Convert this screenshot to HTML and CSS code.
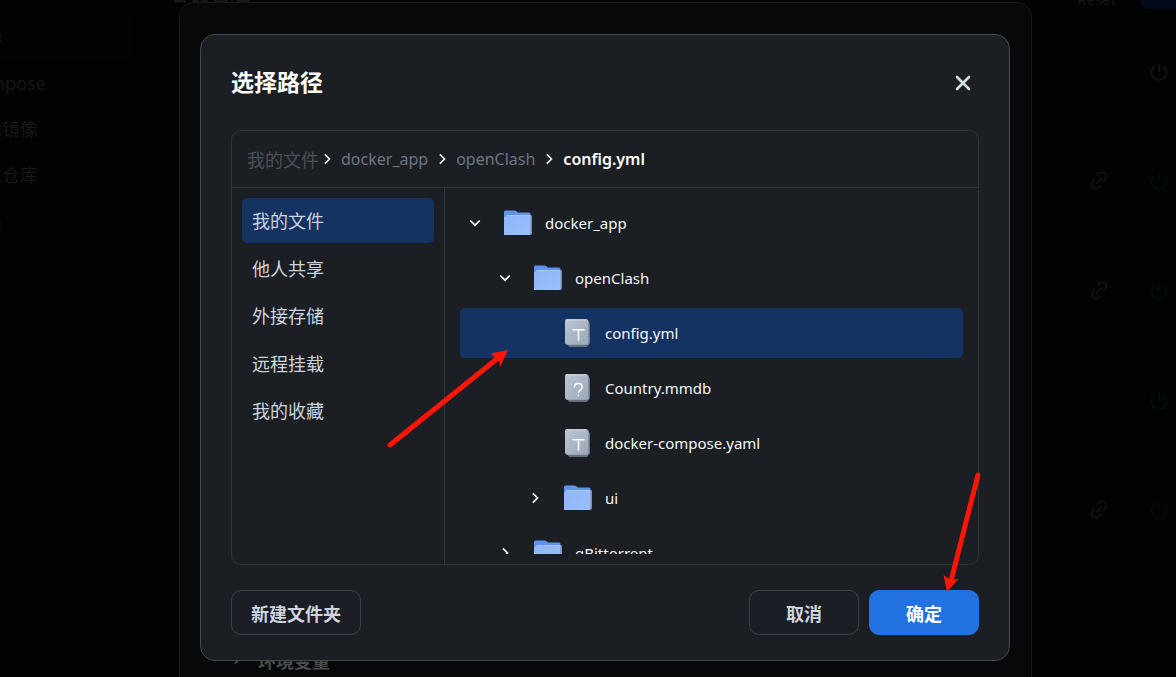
FILE: index.html
```html
<!DOCTYPE html>
<html lang="zh-CN">
<head>
<meta charset="utf-8">
<title>选择路径</title>
<link rel="stylesheet" href="styles.css">
</head>
<body>
<svg class="defs" aria-hidden="true">
  <defs>
    <linearGradient id="sheet" x1="0" y1="0" x2="1" y2="1"><stop offset="0" stop-color="#bcc7d3"/><stop offset="1" stop-color="#9ba8b8"/></linearGradient>
    <linearGradient id="front" x1="0" y1="0" x2="1" y2="1"><stop offset="0" stop-color="#8fb6f8"/><stop offset="1" stop-color="#9abffe"/></linearGradient>
    <symbol id="down" viewBox="0 0 14 14"><path d="M2.300 4.500L7 9.200l4.700-4.700" fill="none" stroke="currentColor" stroke-width="1.700"/></symbol>
    <symbol id="right" viewBox="0 0 14 14"><path d="M4.800 2.300L9.500 7l-4.700 4.700" fill="none" stroke="currentColor" stroke-width="1.700"/></symbol>
    <symbol id="folder" viewBox="0 0 28 26"><path d="M0 2q0-1.500 1.500-1.500h9q1 0 2 .8l1.500 1.200h11q1.500 0 1.500 1.500v21H0z" fill="#5f93ee"/><path d="M3 6q0-1 1-1h23q1 0 1 1v17q0 2-2 2H3z" fill="#7d8ca8"/><path d="M2 6.500q0-1 1-1h22.500q1 0 1 1V23q0 2-2 2H0V7z" fill="url(#front)"/><path d="M2.500 5.500h23.500" stroke="#a9c5ee"/></symbol>
    <symbol id="sheet-base" viewBox="0 0 28 28"><path d="M3 3h22l1 2v19l-3 4H5l-2-3z" fill="#66717f"/><rect x="2" y="1" width="23" height="25" rx="2" fill="#8a97a7"/><rect x="1" y="0" width="23" height="25.500" rx="2" fill="url(#sheet)"/><path d="M2 1h20" stroke="#ccd4de"/></symbol>
    <symbol id="text-file" viewBox="0 0 28 28"><use href="#sheet-base" width="28" height="28"/><path d="M8.500 10.800h12M14.500 10.800v11" stroke="#fff" stroke-width="1.500" fill="none"/></symbol>
    <symbol id="unknown-file" viewBox="0 0 28 28"><use href="#sheet-base" width="28" height="28"/><path d="M10.500 13.200q0-3.700 3.800-3.700t3.800 3.500q0 2-2 3.300-1.800 1.200-1.800 3M14.300 20.800v1.500" stroke="#fff" stroke-width="1.400" fill="none"/></symbol>
    <symbol id="power" viewBox="0 0 18 18"><path d="M9 1v8M4.500 3.500a7.500 7.500 0 1 0 9 0" fill="none" stroke="currentColor" stroke-width="1.500"/></symbol>
    <symbol id="link" viewBox="0 0 18 18"><path d="M7 4l2-2a4 4 0 0 1 6 6l-2 2M11 14l-2 2a4 4 0 0 1-6-6l2-2M6 12l6-6" transform="translate(0 -.5)" fill="none" stroke="currentColor" stroke-width="1.500"/></symbol>
  </defs>
</svg>

<div class="app">
  <nav class="app-nav">
    <a class="active" href="#">容器</a>
    <a href="#">Compose</a>
    <a href="#">本地镜像</a>
    <a href="#">镜像仓库</a>
    <a href="#">网络</a>
  </nav>
  <main class="app-main">
    <header class="app-header"><h1>容器管理</h1><span>Reset</span><button aria-label="新增"></button></header>
    <div class="services">
      <div class="service"><svg><use href="#power"/></svg></div>
      <div class="service on"><svg class="link"><use href="#link"/></svg><svg><use href="#power"/></svg></div>
      <div class="service on"><svg class="link"><use href="#link"/></svg><svg><use href="#power"/></svg></div>
      <div class="service on"><svg><use href="#power"/></svg></div>
      <div class="service on"><svg class="link"><use href="#link"/></svg><svg><use href="#power"/></svg></div>
    </div>
  </main>
</div>

<div class="back-layer"><section class="back-dialog"><svg><use href="#right"/></svg>环境变量</section></div>

<div class="layer">
  <section class="dialog" role="dialog" aria-labelledby="dialog-title">
    <header class="dialog-header">
      <h2 id="dialog-title">选择路径</h2>
      <button class="close" aria-label="关闭"><svg viewBox="0 0 16 16"><path d="M2 2l12 12M14 2L2 14" stroke="currentColor" stroke-width="2.600" stroke-linecap="round"/></svg></button>
    </header>
    <div class="browser">
      <nav class="crumbs">
        <a class="root" href="#">我的文件</a><svg><use href="#right"/></svg>
        <a href="#">docker_app</a><svg><use href="#right"/></svg>
        <a href="#">openClash</a><svg><use href="#right"/></svg>
        <strong>config.yml</strong>
      </nav>
      <div class="panes">
        <div class="places-pane">
          <nav class="places">
            <a class="active" href="#">我的文件</a>
            <a href="#">他人共享</a>
            <a href="#">外接存储</a>
            <a href="#">远程挂载</a>
            <a href="#">我的收藏</a>
          </nav>
        </div>
        <div class="tree-pane">
          <div class="tree" role="tree">
            <div class="node" role="treeitem"><svg class="arrow"><use href="#down"/></svg><svg class="icon"><use href="#folder"/></svg>docker_app</div>
            <div class="node level-1" role="treeitem"><svg class="arrow"><use href="#down"/></svg><svg class="icon"><use href="#folder"/></svg>openClash</div>
            <div class="node level-2 selected" role="treeitem" aria-selected="true"><span class="arrow"></span><svg class="icon"><use href="#text-file"/></svg>config.yml</div>
            <div class="node level-2" role="treeitem"><span class="arrow"></span><svg class="icon"><use href="#unknown-file"/></svg>Country.mmdb</div>
            <div class="node level-2" role="treeitem"><span class="arrow"></span><svg class="icon"><use href="#text-file"/></svg>docker-compose.yaml</div>
            <div class="node level-2" role="treeitem"><svg class="arrow"><use href="#right"/></svg><svg class="icon"><use href="#folder"/></svg>ui</div>
            <div class="node level-1" role="treeitem"><svg class="arrow"><use href="#right"/></svg><svg class="icon"><use href="#folder"/></svg>qBittorrent</div>
          </div>
        </div>
      </div>
    </div>
    <footer class="actions">
      <button class="btn new-folder">新建文件夹</button>
      <button class="btn">取消</button>
      <button class="btn primary">确定</button>
    </footer>
  </section>
</div>

<svg class="annotations" width="1176" height="677" aria-hidden="true">
  <g fill="#ff1408" stroke="#ff1408">
    <path d="M390 445L498 358M978 475L951 581" stroke-width="5" stroke-linecap="round"/>
    <path d="M508 350l-17.500 3.500 5 4.500 4 3.500.5 5.500zM947 592l-3.500-17 5 3.500 4 1 6-.5z" stroke="none"/>
  </g>
</svg>
</body>
</html>
```

FILE: styles.css
```css
* { box-sizing: border-box; }

body {
  margin: 0;
  height: 100vh;
  overflow: hidden;
  background: #010202;
  color: #f4f6f8;
  font-family: "Noto Sans", "Noto Sans CJK SC", sans-serif;
  font-size: 15px;
}

a { color: inherit; text-decoration: none; }
button { font: inherit; color: inherit; cursor: pointer; }
h1, h2 { margin: 0; }
.defs { position: absolute; width: 0; height: 0; }

/* Dimmed application */
.app { display: flex; height: 100%; color: #161718; }
.app-nav {
  flex: none;
  display: flex;
  flex-direction: column;
  gap: 2px;
  width: 200px;
  margin-left: -66px;
  padding-top: 15px;
}
.app-nav a { padding: 0 32px; font-size: 18px; line-height: 44px; white-space: nowrap; }
.app-nav .active { background: #020404; border-radius: 8px; }
.app-main { flex: 1; padding-left: 36px; }
.app-header { display: flex; align-items: flex-end; height: 9px; }
.app-header h1 { flex: 1; font-size: 20px; line-height: 24px; padding-bottom: 3px; }
.app-header span { font-size: 15px; line-height: 20px; margin-right: 24px; }
.app-header button {
  width: 36px;
  height: 44px;
  border: 0;
  border-radius: 0 0 0 8px;
  background: #020a1c;
}
.services { display: grid; grid-auto-rows: 1fr; height: 556px; padding: 8px 8px 0 0; }
.service { display: flex; align-items: center; justify-content: flex-end; gap: 42px; }
.service svg { width: 18px; height: 18px; }
.service.on { color: #03130a; }
.service .link { color: #161718; }

/* Dialog underneath */
.back-layer { position: absolute; inset: 2px 144px 0 179px; display: flex; }
.back-dialog {
  flex: 1;
  display: flex;
  align-items: flex-end;
  gap: 14px;
  padding: 0 50px 4px;
  border: 1px solid #15191b;
  border-bottom: 0;
  border-radius: 15px 15px 0 0;
  background: #060809;
  color: #4a4b4c;
  font-size: 18px;
  font-weight: 700;
}
.back-dialog svg { width: 14px; height: 28px; }

/* Path dialog */
.layer { position: absolute; inset: 34px 166px auto 200px; }
.dialog {
  padding: 30px 30px 25px;
  border: 1px solid #454a50;
  border-radius: 15px;
  background: #1b1e22;
}
.dialog-header { display: flex; align-items: center; justify-content: space-between; height: 35px; margin-bottom: 30px; }
.dialog-header h2 { color: #fff; font-size: 23px; line-height: 35px; }
.close { width: 32px; height: 32px; padding: 8px; border: 0; background: none; color: #d5dde5; }
.close svg { display: block; width: 16px; height: 16px; }

.browser { border: 1px solid #303439; border-radius: 10px; }
.crumbs {
  display: flex;
  align-items: center;
  gap: 10px;
  height: 57px;
  padding: 0 15px;
  border-bottom: 1px solid #303439;
  color: #6c7685;
  font-size: 16px;
}
.crumbs .root { color: #4b515a; font-size: 18px; margin-right: -6px; }
.crumbs svg { width: 14px; height: 14px; margin: 0 -3px; color: #e8ecf0; }
.crumbs strong { color: #fff; font-weight: 600; }

.panes { display: flex; height: 376px; }
.places-pane { flex: none; width: 213px; padding: 10px; border-right: 1px solid #303439; }
.places { display: flex; flex-direction: column; justify-content: space-between; height: 235px; }
.places a { padding: 2px 10px 0; border-radius: 5px; color: #ccd5df; font-size: 18px; line-height: 43px; }
.places .active { background: #143262; }

.tree-pane { flex: 1; padding: 10px 15px; }
.tree { display: flex; flex-direction: column; gap: 5px; height: 356px; overflow: hidden; }
.node { flex: none; display: flex; align-items: center; height: 50px; padding: 0 8px; border-radius: 5px; line-height: 24px; }
.level-1 { padding-left: 38px; }
.level-2 { padding-left: 68px; }
.selected { background: #143262; }
.arrow { width: 14px; height: 14px; margin-right: 22px; }
.icon { width: 28px; height: 28px; margin-right: 13px; }

.actions { display: flex; gap: 10px; margin-top: 25px; }
.btn {
  min-width: 110px;
  height: 45px;
  padding: 0 19px;
  border: 1px solid #3d424b;
  border-radius: 10px;
  background: #1b1e25;
  color: #ccd5df;
  font-size: 18px;
  font-weight: 700;
}
.new-folder { margin-right: auto; }
.primary { border-color: #2273e1; background: #2273e1; color: #fff; }

.annotations { position: absolute; left: 0; top: 0; pointer-events: none; }
```
